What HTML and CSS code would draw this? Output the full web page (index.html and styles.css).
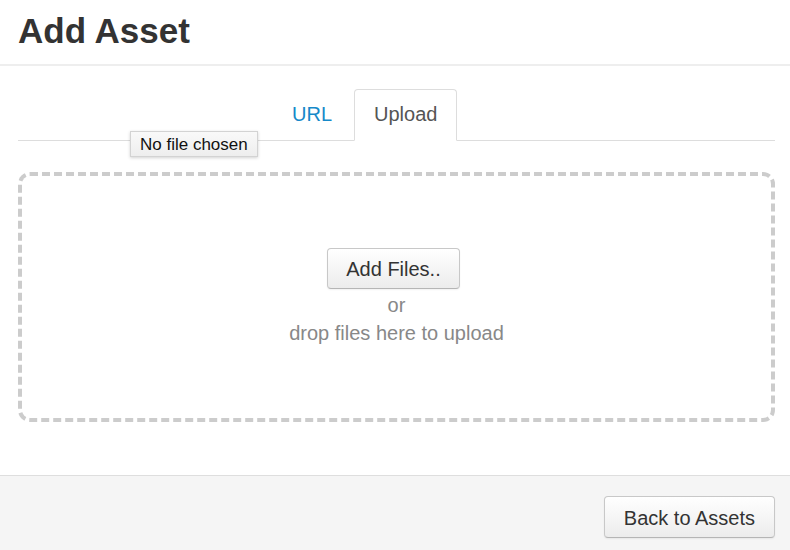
FILE: index.html
```html
<!DOCTYPE html>
<html>
<head>
<meta charset="utf-8">
<link rel="stylesheet" href="styles.css">
</head>
<body>
<div class="header">
  <h1 class="title">Add Asset</h1>
</div>
<div class="main">
  <ul class="tabs">
    <li class="tab"><a class="tab-link">URL</a></li>
    <li class="tab active"><a class="tab-link">Upload</a></li>
  </ul>
  <div class="tooltip">No file chosen</div>
  <div class="dropzone">
    <button class="btn btn-add">Add Files..</button>
    <div class="hint">or</div>
    <div class="hint">drop files here to upload</div>
  </div>
</div>
<div class="footer">
  <button class="btn btn-back">Back to Assets</button>
</div>
</body>
</html>
```

FILE: styles.css
```css
html, body {
  margin: 0;
  padding: 0;
  background: #fff;
  font-family: "Liberation Sans", Arial, sans-serif;
  color: #333;
}
.header {
  padding: 14px 18px 16px;
  border-bottom: 2px solid #eeeeee;
}
.title {
  margin: 0;
  font-size: 35px;
  line-height: 34px;
  font-weight: bold;
  color: #333;
}
.main {
  position: relative;
  padding: 23px 15px 53px 18px;
}
.tabs {
  list-style: none;
  margin: 0;
  padding: 0 0 0 254px;
  display: flex;
  border-bottom: 1px solid #dddddd;
}
.tab {
  margin-bottom: -1px;
  margin-right: 2px;
}
.tab-link {
  display: block;
  padding: 14px 19px 16px;
  font-size: 20px;
  line-height: 20px;
  color: #1689c9;
  border: 1px solid transparent;
  border-radius: 4px 4px 0 0;
}
.tab.active .tab-link {
  color: #555;
  background: #fff;
  border-color: #dddddd;
  border-bottom-color: #fff;
}
.tooltip {
  position: absolute;
  left: 130px;
  top: 65px;
  padding: 0 9px;
  height: 24px;
  line-height: 25px;
  font-size: 17px;
  color: #111;
  background: linear-gradient(#f9f9f9, #eeeeee);
  border: 1px solid #d3d3d3;
  box-shadow: 0 1px 3px rgba(0,0,0,0.18);
}
.dropzone {
  margin-top: 31px;
  border: 4px dashed #cccccc;
  border-radius: 12px;
  display: flex;
  flex-direction: column;
  align-items: center;
  padding-top: 72px;
  box-sizing: border-box;
  height: 250px;
}
.btn {
  font-family: "Liberation Sans", Arial, sans-serif;
  font-size: 20px;
  line-height: 20px;
  color: #333;
  padding: 10px 18px 9px;
  background: linear-gradient(#ffffff, #ececec);
  border: 1px solid #c8c8c8;
  border-bottom-color: #b5b5b5;
  border-radius: 4px;
  box-shadow: 0 1px 2px rgba(0,0,0,0.06);
}
.btn-add {
  margin: 0 6px 2px 0;
}
.btn-back {
  padding: 11px 19px 9px;
}
.hint {
  font-size: 20px;
  line-height: 28px;
  color: #888;
}
.footer {
  border-top: 1px solid #dedede;
  background: #f5f5f5;
  padding: 20px 15px 30px;
  display: flex;
  justify-content: flex-end;
}
```
